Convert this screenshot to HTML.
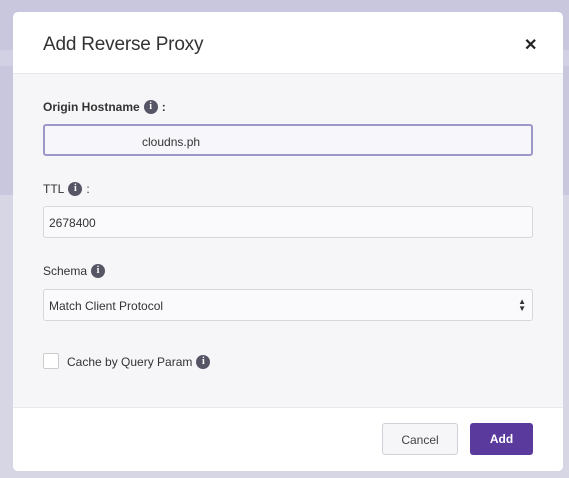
<!DOCTYPE html>
<html><head><style>
*{box-sizing:border-box;margin:0;padding:0}
body{width:569px;height:478px;overflow:hidden;background:#d7d6e4;font-family:"Liberation Sans",sans-serif;position:relative}
.bg1{position:absolute;left:0;top:0;width:569px;height:195px;background:#c9c7dd}
.bg2{position:absolute;left:0;top:50px;width:569px;height:16px;background:#d2d0e3}
.modal{position:absolute;left:13px;top:12px;width:550px;height:459px;background:#fff;border-radius:5px;overflow:hidden}
.hdr{height:62px;border-bottom:1px solid #e6e6ec;position:relative}
.hdr h1{position:absolute;left:30px;top:22px;font-size:19px;font-weight:normal;color:#333;letter-spacing:-0.2px}
.x{position:absolute;left:511px;top:23px;font-size:16px;font-weight:bold;color:#222}
.body{position:absolute;top:62px;left:0;width:550px;height:333px;background:#f6f6f9}
.ftr{position:absolute;top:395px;left:0;width:550px;height:64px;border-top:1px solid #e6e6ec;background:#fff}
.lbl{position:absolute;left:30px;font-size:12px;color:#333;font-weight:bold;line-height:16px;display:flex;align-items:center;gap:4px;white-space:nowrap}
.lbl.n{font-weight:normal}
.i{display:inline-block;width:14px;height:14px;border-radius:50%;background:#555566;color:#fff;font-size:10px;font-weight:bold;text-align:center;line-height:14px;font-family:"Liberation Serif",serif}
.inp{position:absolute;left:30px;width:490px;height:32px;background:#fafafc;border:1px solid #d6d6dc;border-radius:3px;font-size:12px;color:#333;padding:9px 5px}
.inp.f{border:2px solid #9c98c9;background:#f7f7fb}
.btn{position:absolute;top:15px;height:32px;border-radius:3px;font-size:12px;text-align:center;line-height:32px}
</style></head><body>
<div class="bg1"></div><div class="bg2"></div>
<div class="modal">
<div class="hdr"><h1>Add Reverse Proxy</h1><div class="x">✕</div></div>
<div class="body">
<div class="lbl" style="top:25px">Origin Hostname <span class="i">i</span> :</div>
<div class="inp f" style="top:50px;padding-left:97px">cloudns.ph</div>
<div class="lbl n" style="top:107px">TTL <span class="i">i</span> :</div>
<div class="inp" style="top:132px">2678400</div>
<div class="lbl n" style="top:189px">Schema <span class="i">i</span></div>
<div class="inp" style="top:215px">Match Client Protocol<span style="position:absolute;right:6px;top:8px;font-size:8px;line-height:7px;color:#333">▲<br>▼</span></div>
<div style="position:absolute;left:30px;top:279px;width:16px;height:16px;border:1px solid #ccc;border-radius:2px;background:#fff"></div>
<div class="lbl n" style="top:280px;left:54px">Cache by Query Param <span class="i">i</span></div>
</div>
<div class="ftr">
<div class="btn" style="left:369px;width:76px;border:1px solid #d0d0d6;background:#f6f6f8;color:#444">Cancel</div>
<div class="btn" style="left:457px;width:63px;background:#5b3a9e;color:#fff;font-weight:bold">Add</div>
</div>
</div>
</body></html>
